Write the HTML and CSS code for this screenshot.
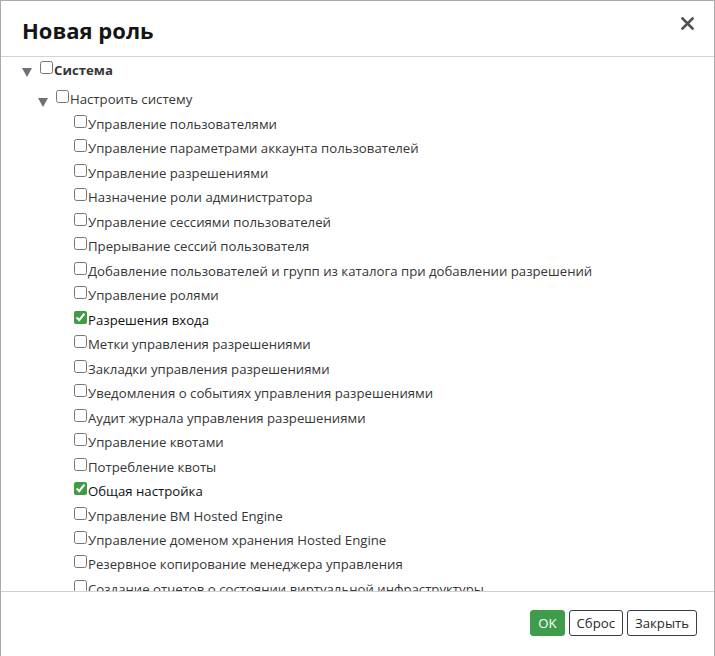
FILE: index.html
```html
<!DOCTYPE html>
<html lang="ru">
<head>
    <meta charset="UTF-8">
    <title>Новая роль</title>
    <link rel="stylesheet" href="styles.css">
</head>
<body>
    <div class="modal">
        <div class="modal-header">
            <h1 class="modal-title">Новая роль</h1>
            <button class="close-btn" aria-label="Закрыть">
                <svg width="13" height="13" viewBox="0 0 13 13"><path d="M1.5 1.5L11.5 11.5M11.5 1.5L1.5 11.5" stroke="#4d5258" stroke-width="2.6" stroke-linecap="square"/></svg>
            </button>
        </div>
        <div class="modal-body">
            <div class="tree-row level-0">
                <span class="toggle"></span>
                <input type="checkbox"><span class="label root-label">Система</span>
            </div>
            <div class="tree-row level-1">
                <span class="toggle"></span>
                <input type="checkbox"><span class="label">Настроить систему</span>
            </div>
            <div class="tree-leaves">
                <div class="leaf"><input type="checkbox"><span class="label">Управление пользователями</span></div>
                <div class="leaf"><input type="checkbox"><span class="label">Управление параметрами аккаунта пользователей</span></div>
                <div class="leaf"><input type="checkbox"><span class="label">Управление разрешениями</span></div>
                <div class="leaf"><input type="checkbox"><span class="label">Назначение роли администратора</span></div>
                <div class="leaf"><input type="checkbox"><span class="label">Управление сессиями пользователей</span></div>
                <div class="leaf"><input type="checkbox"><span class="label">Прерывание сессий пользователя</span></div>
                <div class="leaf"><input type="checkbox"><span class="label">Добавление пользователей и групп из каталога при добавлении разрешений</span></div>
                <div class="leaf"><input type="checkbox"><span class="label">Управление ролями</span></div>
                <div class="leaf checked"><input type="checkbox" checked><span class="label">Разрешения входа</span></div>
                <div class="leaf"><input type="checkbox"><span class="label">Метки управления разрешениями</span></div>
                <div class="leaf"><input type="checkbox"><span class="label">Закладки управления разрешениями</span></div>
                <div class="leaf"><input type="checkbox"><span class="label">Уведомления о событиях управления разрешениями</span></div>
                <div class="leaf"><input type="checkbox"><span class="label">Аудит журнала управления разрешениями</span></div>
                <div class="leaf"><input type="checkbox"><span class="label">Управление квотами</span></div>
                <div class="leaf"><input type="checkbox"><span class="label">Потребление квоты</span></div>
                <div class="leaf checked"><input type="checkbox" checked><span class="label">Общая настройка</span></div>
                <div class="leaf"><input type="checkbox"><span class="label">Управление ВМ Hosted Engine</span></div>
                <div class="leaf"><input type="checkbox"><span class="label">Управление доменом хранения Hosted Engine</span></div>
                <div class="leaf"><input type="checkbox"><span class="label">Резервное копирование менеджера управления</span></div>
                <div class="leaf"><input type="checkbox"><span class="label">Создание отчетов о состоянии виртуальной инфраструктуры</span></div>
            </div>
        </div>
        <div class="modal-footer">
            <button class="btn btn-primary">OK</button>
            <button class="btn">Сброс</button>
            <button class="btn">Закрыть</button>
        </div>
    </div>
</body>
</html>
```

FILE: styles.css
```css
body {
    margin: 0;
    padding: 0;
    font-family: "Open Sans", sans-serif;
    background-color: #fff;
    overflow: hidden;
}
.modal {
    height: 660px;
    border: 1px solid #a9a9a9;
    border-bottom: none;
    background-color: #fff;
    display: flex;
    flex-direction: column;
}
.modal-header {
    height: 55px;
    flex-shrink: 0;
    display: flex;
    align-items: center;
    justify-content: space-between;
    padding: 0 20px 0 21px;
    border-bottom: 1px solid #d1d1e0;
}
.modal-title {
    margin: 0;
    font-size: 22px;
    font-weight: 700;
    color: #151515;
    line-height: 1;
    padding-top: 2px;
}
.close-btn {
    background: none;
    border: none;
    padding: 0;
    width: 13px;
    height: 13px;
    margin-bottom: 10px;
    cursor: pointer;
}
.close-btn svg {
    display: block;
}
.modal-body {
    height: 534px;
    flex-shrink: 0;
    overflow: hidden;
    padding-top: 4px;
    box-sizing: border-box;
}
.tree-row {
    display: flex;
    align-items: baseline;
    font-size: 13.2px;
    color: #363636;
}
.level-0 {
    padding-left: 21px;
    height: 25px;
}
.level-1 {
    padding-left: 37px;
    height: 25px;
    padding-top: 4px;
}
.toggle {
    display: inline-block;
    width: 0;
    height: 0;
    border-left: 5px solid transparent;
    border-right: 5px solid transparent;
    border-top: 9px solid #6d7078;
    margin-right: 8px;
    align-self: center;
    margin-top: -3px;
}
.level-1 .toggle {
    margin-top: -1px;
}
input[type="checkbox"] {
    margin: 0 1px 0 0;
    width: 13px;
    height: 13px;
    accent-color: #3f9c45;
    position: relative;
    top: -1px;
}
.root-label {
    font-weight: 700;
}
.tree-leaves {
    padding-left: 73px;
}
.leaf {
    height: 24.47px;
    display: flex;
    align-items: baseline;
    font-size: 13.2px;
    color: #363636;
    white-space: nowrap;
}
.leaf.checked {
    color: #111;
}
.modal-footer {
    flex: 1;
    border-top: 1px solid #d1d1d1;
    display: flex;
    justify-content: flex-end;
    align-items: flex-start;
    gap: 4px;
    padding: 18px 17px 0 0;
}
.btn {
    font-family: "Open Sans", sans-serif;
    font-size: 13.2px;
    height: 26px;
    padding: 0 7px;
    border: 1px solid #3a3d45;
    border-radius: 3px;
    background-color: #fff;
    color: #292929;
    cursor: pointer;
}
.btn-primary {
    background-color: #3f9c4a;
    border-color: #3f9c4a;
    color: #fff;
}
```
